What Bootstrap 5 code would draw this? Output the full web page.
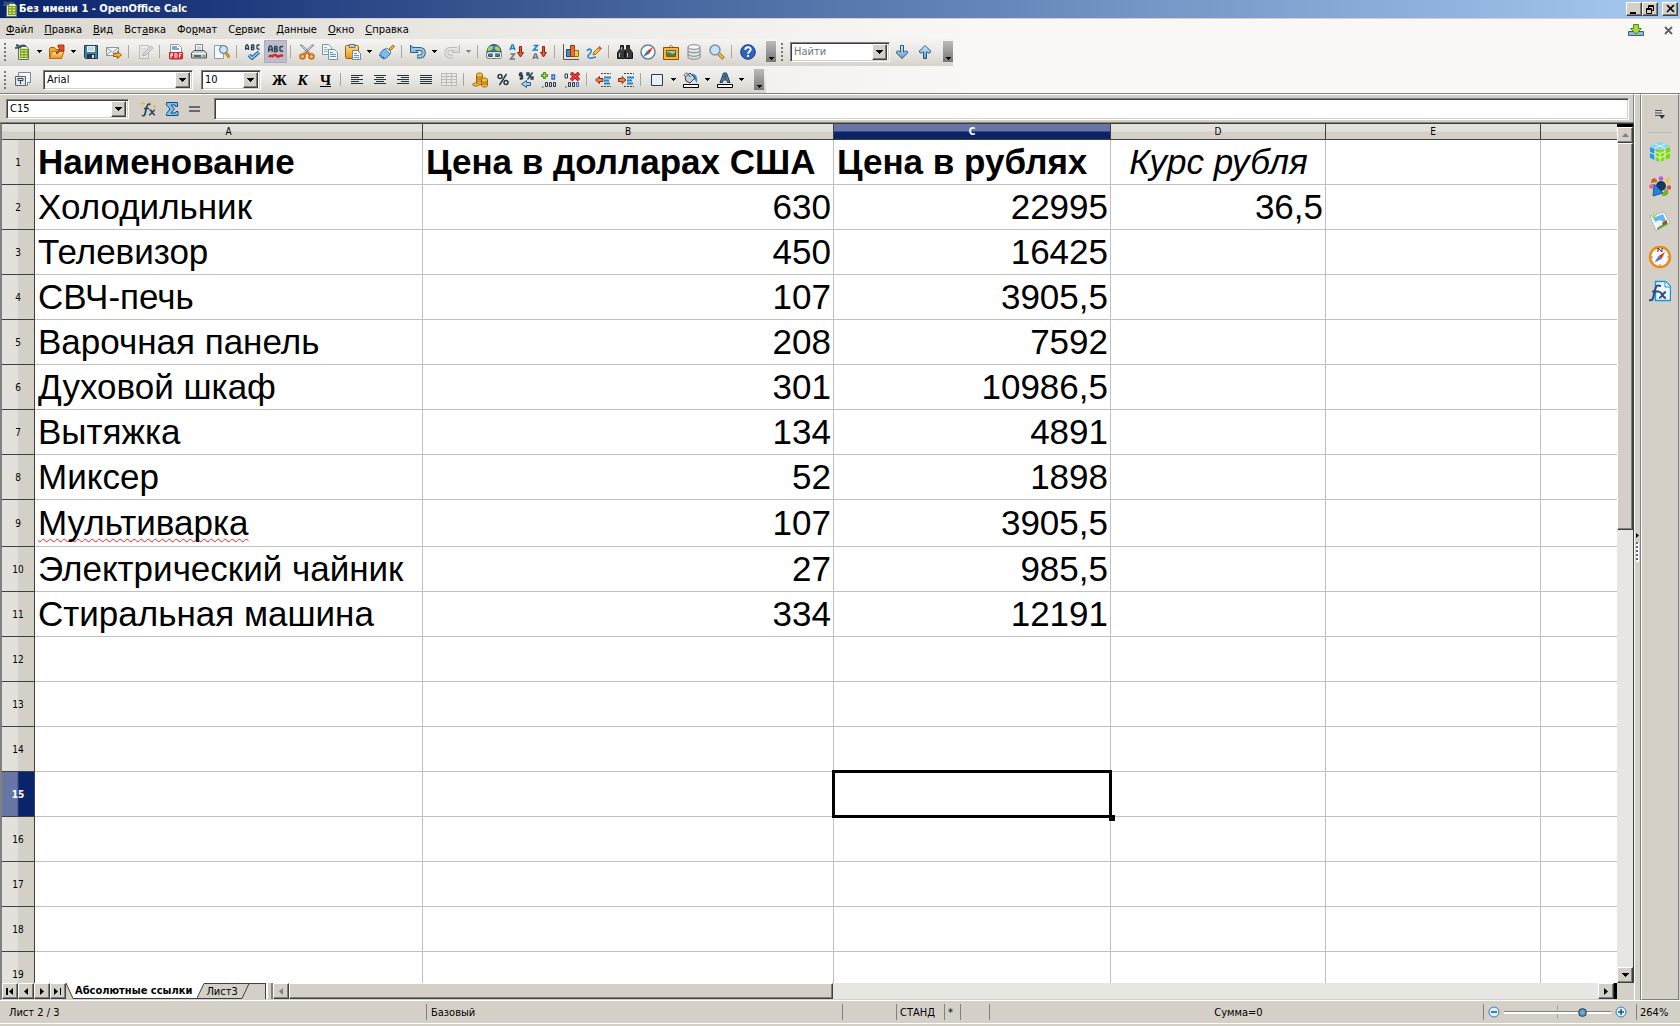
<!DOCTYPE html>
<html lang="ru">
<head>
<meta charset="utf-8">
<meta name="viewport" content="width=device-width, initial-scale=1">
<title>Без имени 1 - OpenOffice Calc</title>
<link href="https://cdn.jsdelivr.net/npm/bootstrap@5.3.0/dist/css/bootstrap.min.css" rel="stylesheet">
<style>
:root{--face:#d4d0c8;--dark:#404040;--shade:#808080}
body{font-family:"DejaVu Sans Condensed","DejaVu Sans",sans-serif;font-size:11px;line-height:14px;color:#000;background:var(--face)}
button,input,select{font:inherit;color:inherit;border-radius:0}
svg{display:block;flex:none}
.titlebar{height:19px;background:linear-gradient(90deg,#0a246a,#a6caf0);color:#fff;border-bottom:1px solid var(--face);padding:0 2px 0 3px}
.win-btn,.sq-btn{padding:0;background:var(--face);border:1px solid;border-color:#fff var(--dark) var(--dark) #fff;box-shadow:inset -1px -1px var(--shade);display:flex;align-items:center;justify-content:center;flex:none}
.win-btn{width:16px;height:14px}
.sq-btn{width:16px;height:16px}
.chrome{background:linear-gradient(90deg,#dcd9d2,#f9f8f6 58%);border-bottom:1px solid var(--shade)}
.menus{height:20px;padding:2px 0 0 6px;gap:11px}
.menus a{color:#000;text-decoration:none}
.menu-tools{gap:10px}
.tbar{height:27px;background:linear-gradient(#f5f4f2,#e9e7e3 50%,#d6d3cc);padding:0 0 2px 3px}
.tbar.second{width:766px;padding-bottom:0}
.grip{width:8px;height:19px;background:radial-gradient(circle at 2px 2px,#777 1px,transparent 1px) 0 0/4px 4px repeat-y}
.tb{width:23px;height:23px;padding:0;border:0;background:none;display:flex;align-items:center;justify-content:center;flex:none}
.tb.pressed{background:#bdbdcf;border:1px solid #acacc2}
.dd{width:11px;height:23px;padding:0;border:0;background:none;display:flex;align-items:center;justify-content:center;flex:none}
.sep{width:1px;height:13px;margin:0 4px 0 3px;background:#aaa69e;flex:none}
.more{width:10px;height:21px;margin-left:7px;border:0;padding:0 0 2px;background:linear-gradient(#bbb,#777);display:flex;align-items:flex-end;justify-content:center}
.combo{height:20px;background:#fff;border:1px solid;border-color:var(--shade) #fff #fff var(--shade);box-shadow:inset 1px 1px var(--dark),inset -1px -1px var(--face);padding:2px 2px 2px 3px;flex:none}
.combo select,.combo input{border:0;background:none;appearance:none;padding:0;outline:0;min-width:0;flex:1 1 0}
.combo .sq-btn{width:15px;height:16px}
.w-font{width:150px;margin:0 8px 0 9px}
.w-size{width:60px;margin-right:7px}
.w-find{width:100px;margin-left:2px}
.w-cell{width:123px}
.glyph{font-family:"Liberation Serif",serif;font-weight:700;font-size:15px;line-height:18px}
.fbar{height:29px;padding:0 4px 0 6px;border-right:1px solid var(--shade);border-bottom:1px solid var(--shade);border-top:1px solid #fff}
.fbar .line{height:22px}
.sheet{border-left:2px solid var(--shade);border-top:1px solid var(--dark);min-height:0;flex:1 1 0}
.grid{flex:1 1 0;min-width:0;overflow:hidden;background:#fff}
.grid table{border-collapse:separate;border-spacing:0;table-layout:fixed;width:100%;font-family:"Liberation Sans",Arial,sans-serif;font-size:35px;line-height:40px}
.grid th,.grid td{padding:0 2px 0 3px;white-space:nowrap;border-right:1px solid #c0c0c0;border-bottom:1px solid #c0c0c0;vertical-align:middle}
.grid tbody tr{height:45px}
.grid tbody tr.tall{height:47px}
.grid thead th,.grid tbody th{font-family:"DejaVu Sans Condensed",sans-serif;font-size:10px;line-height:14px;font-weight:400;text-align:center;padding:0;border-color:var(--dark)}
.grid thead th{height:16px;background:linear-gradient(#e2e1dc 7px,var(--face) 8px)}
.grid tbody th{padding-top:2px;background:linear-gradient(90deg,#e2e1dc 15px,var(--face) 17px)}
.grid thead th.on{background:linear-gradient(#6876a6 7px,#0a246a 8px);color:#fff;font-weight:700}
.grid tbody th.on{background:linear-gradient(90deg,#6876a6 15px,#0a246a 17px);color:#fff;font-weight:700}
.grid .num{text-align:right}
.grid .rate{font-style:italic;text-align:center}
.grid td:last-child,.grid thead th:last-child{border-right:0}
.typo{text-decoration:underline wavy #e22 1px;text-underline-offset:3px;text-decoration-skip-ink:none}
.cursor{position:absolute;inset:-2px;border:3px solid #000}
.cursor::after{content:"";position:absolute;right:-6px;bottom:-6px;width:6px;height:6px;background:#000}
.vbar{width:17px;background:#e8e6e2;border-right:1px solid var(--dark)}
.vbar .cap{height:3px;background:#000}
.thumb{background:var(--face);border:1px solid;border-color:#fff var(--dark) var(--dark) #fff;box-shadow:inset -1px -1px var(--shade)}
.vbar .thumb{flex:0 0 45%}
.tabs{height:17px;border-left:2px solid var(--shade);border-bottom:1px solid var(--face)}
.tabs .sheet-tab{height:16px;border:0;border-bottom:1px solid var(--dark);padding:0 0 0 1px;line-height:16px;background:var(--face);border-top:1px solid var(--dark)}
.tabs .sheet-tab.now{background:#fff;font-weight:700;border-top:0;padding:0 5px 0 2px}
.tabfill{width:16px;height:16px;border:1px solid var(--dark);border-left:0;border-bottom:0}
.split{width:7px;height:16px;border-left:2px solid #fff;border-right:2px solid var(--shade)}
.hbar{background:#e8e6e2;height:16px;flex:1 1 0;min-width:0}
.hbar .thumb{height:16px;width:544px}
.side-split{width:7px;border-left:1px solid #fff;border-right:1px solid var(--shade);border-top:1px solid #fff;flex:none}
.dots{width:3px;height:20px;background:radial-gradient(circle at 1px 1px,#666 1px,#fff 1px) 0 0/3px 4px}
.side{width:38px;margin-right:1px;border:1px solid var(--shade);border-left-color:#fff;border-top-color:#fff;padding-top:9px;flex:none}
.side .tb{height:35px;width:30px}
.side .tb.cfg{height:20px}
.side hr{width:24px;margin:8px 0 1px;border-color:var(--shade)}
.status{height:26px;border-top:1px solid #fff;padding-bottom:1px}
.status .inner{height:23px;border-bottom:1px solid #fff}
.pane{height:16px;line-height:18px;border-left:1px solid var(--shade);padding-left:4px;white-space:nowrap;flex:none}
.p-sheet{width:426px;padding-left:9px;border:0}.p-style{width:416px}.p-x{width:54px}.p-std{width:48px;padding-left:3px}.p-star{width:16px;padding-left:3px}.p-y{width:29px}.p-zoom{width:153px;padding:0 9px 0 4px}.p-pct{width:44px;padding-left:3px}
.zoomer{appearance:none;background:linear-gradient(var(--shade) 1px,#fff 1px) center/100% 3px no-repeat,linear-gradient(#aaa69e,#aaa69e) center/1px 14px no-repeat;height:14px;width:0;min-width:0;flex:1 1 0;margin:0 4px}
.zoomer::-webkit-slider-thumb{appearance:none;width:9px;height:9px;border-radius:50%;background:radial-gradient(#8bbbd8,#2b6c95);border:1px solid #1e4c6d}
</style>
<script src="https://cdn.jsdelivr.net/npm/bootstrap@5.3.0/dist/js/bootstrap.bundle.min.js"></script>
</head>
<body class="vh-100 d-flex flex-column overflow-hidden">
<svg width="0" height="0" class="position-absolute" aria-hidden="true"><defs>
<linearGradient id="gb" x2="0" y2="1"><stop stop-color="#d8edfa"/><stop offset="1" stop-color="#5a9dce"/></linearGradient>
<linearGradient id="go" x2="0" y2="1"><stop stop-color="#ffe08a"/><stop offset="1" stop-color="#e8921c"/></linearGradient>
<symbol id="dn" viewBox="0 0 5 3"><path d="M0 0h5v1H4v1H3v1H2V2H1V1H0z"/></symbol>
<symbol id="dn7" viewBox="0 0 7 4"><path d="M0 0h7v1H6v1H5v1H4v1H3V3H2V2H1V1H0z"/></symbol>
<symbol id="calc" viewBox="0 0 16 16"><path d="M3.500 2.500h8l2 2v11h-10z" fill="#f8faf8" stroke="#5f6d5f"/><path d="M5.500 5.500h7v8h-7z" fill="#f4fae0" stroke="#7fa515" stroke-width="1.400"/><path d="M9 5.500v8M5.500 8h7M5.500 10.700h7" stroke="#7fa515" stroke-width="1.400"/><path d="M0 4.500c2-2 3 0 4-1s4-3 7-1M1 1c3 0 4 2 5 3" fill="none" stroke="#3f586e" stroke-width="2"/></symbol>
</defs></svg>

<header class="titlebar d-flex align-items-center">
  <svg width="16" height="16"><use href="#calc"/></svg>
  <strong class="flex-grow-1">Без имени 1 - OpenOffice Calc</strong>
  <button class="win-btn" aria-label="Свернуть"><svg width="10" height="9"><path d="M1 7h6v2H1z"/></svg></button>
  <button class="win-btn" aria-label="Восстановить"><svg width="10" height="9" fill="none" stroke="#000"><path d="M3.500 3V.500h5v5H7M3 1.500h6M1.500 3.500h5v5h-5zM1 4.500h6"/></svg></button>
  <button class="win-btn ms-1" aria-label="Закрыть"><svg width="9" height="8"><path d="M1 0l7 7M8 0L1 7" stroke="#000" stroke-width="1.600"/></svg></button>
</header>

<div class="chrome flex-shrink-0">
  <nav class="menus d-flex align-items-center" aria-label="Главное меню">
    <a href="#"><u>Ф</u>айл</a><a href="#"><u>П</u>равка</a><a href="#"><u>В</u>ид</a><a href="#">Вст<u>а</u>вка</a><a href="#">Фо<u>р</u>мат</a><a href="#">С<u>е</u>рвис</a><a href="#"><u>Д</u>анные</a><a href="#"><u>О</u>кно</a><a href="#"><u>С</u>правка</a>
    <div class="menu-tools ms-auto d-flex align-items-center">
      <button class="tb" aria-label="Обновления"><svg width="16" height="14"><path d="M.5 8.500h15v4H.5z" fill="#8fb7d2" stroke="#35607e"/><path d="M5.500 1.500h5v4h3L8 11 2.500 5.500h3z" fill="#a5db3c" stroke="#4d8a12"/></svg></button>
      <button class="tb" aria-label="Закрыть документ"><svg width="9" height="9"><path d="M1 1l7 7M8 1L1 8" stroke="#5b6168" stroke-width="1.800"/></svg></button>
    </div>
  </nav>

  <div class="d-flex">
  <div class="tbar d-flex align-items-center" role="toolbar" aria-label="Стандартная">
    <span class="grip"></span>
    <button class="tb" aria-label="Создать"><svg width="16" height="16"><use href="#calc"/></svg></button><button class="dd" aria-label="Создать: список"><svg width="5" height="3"><use href="#dn"/></svg></button>
    <button class="tb" aria-label="Открыть"><svg width="16" height="16"><path d="M.5 14.500v-10l1-1h4l1 2h6v9z" fill="#f0aa35" stroke="#a85f0c"/><path d="M.5 14.500L3 7.500h12l-2.500 7z" fill="url(#go)" stroke="#b8700f"/><path d="M7 9l4-4-2-2V1h6v6h-2l-1-1-4 4z" fill="#f04a24" stroke="#9c2208" stroke-width=".8"/></svg></button><button class="dd" aria-label="Открыть: список"><svg width="5" height="3"><use href="#dn"/></svg></button>
    <button class="tb" aria-label="Сохранить"><svg width="14" height="14"><path d="M.5.500h13v13h-12l-1-1z" fill="#457f9f" stroke="#173f56"/><path d="M3 1h8v6H3z" fill="#eaf5fb"/><path d="M4 3h6M4 5h6" stroke="#9cbccc"/><path d="M3 9h8v4H3z" fill="#233845"/><path d="M8 10h2v3H8z" fill="#d3e2ea"/></svg></button>
    <button class="tb" aria-label="Письмо"><svg width="16" height="14"><path d="M.5 2.500h12v8H.5z" fill="#edf2f6" stroke="#8a97a2"/><path d="M.5 2.500l6 5 6-5M.5 10.500l4-4M12 10L8.500 6.500" fill="none" stroke="#8a97a2"/><path d="M7.500 8.500h4v-2l4 3.500-4 3.500v-2h-4z" fill="#f6ae2d" stroke="#9b5e07"/></svg></button>
    <span class="sep"></span>
    <button class="tb" aria-label="Правка" disabled><svg width="16" height="16" opacity=".55"><path d="M2.500 1.500h9v13h-9z" fill="#eee" stroke="#999"/><path d="M4 5h6M4 8h5M4 11h3" stroke="#aaa"/><path d="M6 12l1-3 7-7 2 2-7 7z" fill="#ccc" stroke="#888"/></svg></button>
    <span class="sep"></span>
    <button class="tb" aria-label="Экспорт в PDF"><svg width="14" height="16"><path d="M1.500.500h8l3 3v12h-11z" fill="#fff" stroke="#8b98a3"/><path d="M3 3h5M3 5h7" stroke="#5d89b0" stroke-width="1.500"/><path d="M0 8h14v7H0z" fill="#e5252a"/><path d="M2 14V9.500h1.500v2H2M6 9.500v4h1.500l.5-1v-2l-.5-1zM10.500 14V9.500H13M10.500 11.500H12" fill="none" stroke="#fff"/></svg></button>
    <button class="tb" aria-label="Печать"><svg width="16" height="16"><path d="M4.500.500h7v7h-7z" fill="#fff" stroke="#7b8790"/><path d="M6 3h4M6 5h4" stroke="#9ab"/><path d="M.5 9L3 6.500h10L15.500 9v5H.5z" fill="#c4cacd" stroke="#4f585d"/><path d="M1 9.500h14" stroke="#fff"/><path d="M3 11h7v2H3z" fill="#59636a"/><path d="M12 11h2v2h-2z" fill="#4ec336"/></svg></button>
    <button class="tb" aria-label="Предварительный просмотр"><svg width="16" height="16"><path d="M.5 1.500h7l2 2v11h-9z" fill="#f6f9fb" stroke="#8e9ba5"/><circle cx="9.500" cy="5.500" r="4" fill="#c8e4f7" stroke="#47667d"/><path d="M12 9l3.500 4.500" stroke="#b37a13" stroke-width="3"/><path d="M12 9l3 4" stroke="#f4bf4c"/></svg></button>
    <span class="sep"></span>
    <button class="tb" aria-label="Орфография"><svg width="16" height="16"><path d="M.5 6V3l1-2h1l1 2v3M1 4.500h2M6.500 1v4.500h2l.5-1-.5-1.200h-2 1.800L9 2l-.5-1h-2M14.500 1.500l-1-.7-1.500.7v3l1.500 1 1-.8" fill="none" stroke="#263f55" stroke-width="1.300"/><path d="M4 11l3 3 7-6" fill="none" stroke="#1f5c94" stroke-width="3.600"/><path d="M4 11l3 3 7-6" fill="none" stroke="#8fd0ff" stroke-width="1.600"/></svg></button>
    <button class="tb pressed" aria-label="Автопроверка"><svg width="16" height="16"><path d="M.7 8V4l1.300-2h1l1.200 2v4M1 5.500h3M6.500 2.500v5h2.200l.8-1-.8-1.500H6.500h2l.7-1.200-.7-1.300h-2M15 3l-1-.7-2 .7v3.500l2 1 1-.8" fill="none" stroke="#2b3f52" stroke-width="1.400"/><path d="M1 13c2-3 3 0 4-1s2-2 4 0 2-2 6 0" fill="none" stroke="#e3231c" stroke-width="2.500"/></svg></button>
    <span class="sep"></span>
    <button class="tb" aria-label="Вырезать"><svg width="16" height="16"><path d="M1 1l9 9 1.500-1L3 1zM15 1l-9 9-1.500-1L13 1z" fill="#dbe4ea" stroke="#66747e" stroke-width=".8"/><circle cx="3.500" cy="12.500" r="2.300" fill="none" stroke="#d96d0e" stroke-width="2"/><circle cx="12.500" cy="12.500" r="2.300" fill="none" stroke="#d96d0e" stroke-width="2"/><path d="M5 11l3-2.500 3 2.500" fill="none" stroke="#d96d0e" stroke-width="2"/></svg></button>
    <button class="tb" aria-label="Копировать"><svg width="16" height="16" fill="#f3f8fc" stroke="#7793a8"><path d="M.5.500h6l3 3v7h-9z"/><path d="M2 3.500h3M2 5.500h5M2 7.500h5" stroke="#8fb6d4"/><path d="M6.500 5.500h6l3 3v7h-9z"/><path d="M8 8.500h3M8 10.500h6M8 12.500h6" stroke="#5a95c4"/></svg></button>
    <button class="tb" aria-label="Вставить"><svg width="16" height="16"><rect x=".5" y="1.500" width="13" height="13" rx="1" fill="url(#go)" stroke="#9d5f0b"/><path d="M4 .500h6v3H4z" fill="#c6ced3" stroke="#69757d"/><path d="M7.500 6.500h5l3 3v6h-8z" fill="#f3f8fc" stroke="#6c879c"/><path d="M9 9.500h3M9 11.500h5M9 13.500h5" stroke="#5a95c4"/></svg></button><button class="dd" aria-label="Вставить: список"><svg width="5" height="3"><use href="#dn"/></svg></button>
    <button class="tb" aria-label="Формат по образцу"><svg width="16" height="16"><path d="M10 5l4-4 1.500 1.500-4 4z" fill="#f4b83c" stroke="#a16a0b"/><path d="M6 5l5 5c-2 3-5 5-7 5l1-2-3 1 1-2-2.500 0C1 9 3 6 6 5z" fill="#7bbdf2" stroke="#2d6aa8"/><path d="M6 5l2-1 4 4-1 2z" fill="#d7e9f7" stroke="#5d83a5"/></svg></button>
    <span class="sep"></span>
    <button class="tb" aria-label="Отменить"><svg width="16" height="16"><path d="M3 5h7a3.500 3.500 0 010 7.500H7" fill="none" stroke="#2c6288" stroke-width="4.200"/><path d="M.5 1v7.500H8L5.500 6 7 4.500 4 3 3 4z" fill="#8cc1e2" stroke="#2c6288"/><path d="M3 5h7a3.500 3.500 0 010 7.500H7.500" fill="none" stroke="#9fcde8" stroke-width="2.200"/></svg></button><button class="dd" aria-label="Отменить: список"><svg width="5" height="3"><use href="#dn"/></svg></button>
    <button class="tb" aria-label="Вернуть" disabled><svg width="16" height="16"><path d="M13 5H6a3.500 3.500 0 000 7.500h3" fill="none" stroke="#b9b9b9" stroke-width="4"/><path d="M15.500 1v7.500H8L10.500 6" fill="#ddd" stroke="#b9b9b9"/><path d="M13 5H6a3.500 3.500 0 000 7.500h2.500" fill="none" stroke="#e4e4e4" stroke-width="2"/></svg></button><button class="dd" aria-label="Вернуть: список" disabled><svg width="5" height="3" fill="#888"><use href="#dn"/></svg></button>
    <span class="sep"></span>
    <button class="tb" aria-label="Гиперссылка"><svg width="16" height="16"><circle cx="8" cy="7.500" r="7" fill="#3c78b8" stroke="#28507a"/><path d="M2 4c3-3 4-2 5-1S5 7 3 7 1 6 2 4zM9 3c2-2 5 1 5 3s-3 1-4 0-2-2-1-3z" fill="#a7d84b"/><rect x="1.200" y="8.800" width="7.500" height="5" rx="2.500" fill="none" stroke="#2d3a33" stroke-width="2.400"/><rect x="7.300" y="8.800" width="7.500" height="5" rx="2.500" fill="none" stroke="#2d3a33" stroke-width="2.400"/><rect x="1.200" y="8.800" width="7.500" height="5" rx="2.500" fill="none" stroke="#e8eee8" stroke-width="1.400"/><rect x="7.300" y="8.800" width="7.500" height="5" rx="2.500" fill="none" stroke="#e8eee8" stroke-width="1.400"/></svg></button>
    <button class="tb" aria-label="Сортировка по возрастанию"><svg width="16" height="16" fill="none"><path d="M1 6l2-5h1l2 5M2 4.500h3" stroke="#1683d2" stroke-width="1.500"/><path d="M1.500 10h4l-4 5h4.500" stroke="#6b7681" stroke-width="1.500"/><path d="M10.500 2.500h2v6h2L11.500 13 8.500 8.500h2z" fill="#ee5730" stroke="#8d2408"/></svg></button>
    <button class="tb" aria-label="Сортировка по убыванию"><svg width="16" height="16" fill="none"><path d="M1.500 1.500h4l-4 4.500h4.500" stroke="#1683d2" stroke-width="1.500"/><path d="M1 15l2-5h1l2 5M2 13.500h3" stroke="#6b7681" stroke-width="1.500"/><path d="M10.500 2.500h2v6h2L11.500 13 8.500 8.500h2z" fill="#ee5730" stroke="#8d2408"/></svg></button>
    <span class="sep"></span>
    <button class="tb" aria-label="Диаграмма"><svg width="16" height="16"><path d="M.5 0v15.500H16" fill="none" stroke="#555"/><path d="M3.500 5.500h4v7h-4z" fill="#3d8fc9" stroke="#1a4a70"/><path d="M7.500 1.500h4v11h-4z" fill="#ee6d2d" stroke="#93340b"/><path d="M11.500 6.500h4v6h-4z" fill="#f6c64c" stroke="#976909"/></svg></button>
    <button class="tb" aria-label="Рисование"><svg width="16" height="16"><path d="M1 7c2-3 5-2 4 1s-4 3-3 5 5 1 8 0" fill="none" stroke="#3583c9" stroke-width="1.600"/><path d="M7 11l1-3 5.500-5.500 2 2L10 10z" fill="#f8cb45" stroke="#9a6b10"/><path d="M12 4l1.500-1.500 2 2L14 6z" fill="#e7566a"/></svg></button>
    <span class="sep"></span>
    <button class="tb" aria-label="Найти и заменить"><svg width="16" height="16" fill="#39393b" stroke="#161616"><path d="M3.500 1.500h3v3l1 2v8h-7v-6l3-4zM12.500 1.500h-3v3l-1 2v8h7v-6l-3-4z"/><path d="M2.500 9v4M10.500 9v4M4.500 3v3" stroke="#bbb"/></svg></button>
    <button class="tb" aria-label="Навигатор"><svg width="16" height="16"><circle cx="8" cy="8" r="7" fill="#f4f9fd" stroke="#668294" stroke-width="1.500"/><path d="M13 3L9.500 9.500 7 7z" fill="#e02a1c"/><path d="M3 13l4-6 2.500 2.500z" fill="#2d6fbf"/></svg></button>
    <button class="tb" aria-label="Галерея"><svg width="16" height="16"><path d="M5 4l3-3 3 3" fill="none" stroke="#8f8f8f"/><path d="M.5 3.500h15v12H.5z" fill="#f7b63c" stroke="#8d4d05"/><path d="M3.500 6.500h9v6h-9z" fill="#8fc8ee" stroke="#8d4d05"/><path d="M4 12V9l2-1 3 2 3-1v3z" fill="#3f8b28"/></svg></button>
    <button class="tb" aria-label="Источники данных"><svg width="14" height="16" fill="#dfe3e6" stroke="#7e868b"><path d="M1 3v10c0 3 12 3 12 0V3"/><ellipse cx="7" cy="3" rx="6" ry="2.300" fill="#f7f8f8"/><path d="M1 6.500c0 3 12 3 12 0M1 10c0 3 12 3 12 0" fill="none"/></svg></button>
    <button class="tb" aria-label="Масштаб"><svg width="16" height="16"><path d="M9.500 9.500l5 5" stroke="#9a6610" stroke-width="3.600"/><path d="M9.500 9.500l4.500 4.500" stroke="#f5bf42" stroke-width="2"/><circle cx="6" cy="6" r="5" fill="#c5e3fa" stroke="#7990a3" stroke-width="1.500"/></svg></button>
    <span class="sep"></span>
    <button class="tb" aria-label="Справка"><svg width="16" height="16"><circle cx="8" cy="8" r="7.300" fill="#2c62c3" stroke="#1a3c86"/><path d="M5.300 6c0-3.500 5.400-3.500 5.400-.5C10.700 7.500 8 7.500 8 9.700" fill="none" stroke="#fff" stroke-width="1.900"/><path d="M7 11h2v2H7z" fill="#fff"/></svg></button>
    <button class="more" aria-label="Ещё"><svg width="5" height="3"><use href="#dn"/></svg></button>
  </div>
  <div class="tbar d-flex align-items-center ps-1" role="toolbar" aria-label="Поиск">
    <span class="grip"></span>
    <span class="combo w-find d-flex align-items-center"><input class="text-secondary" aria-label="Найти" value="Найти"><button class="sq-btn" aria-label="История поиска"><svg width="7" height="4"><use href="#dn7"/></svg></button></span>
    <button class="tb" aria-label="Найти далее"><svg width="12" height="14"><path d="M4.500.500h3V7h1l1.500-1.500 1.500 1.500v1L6 13.500.5 8V7L2 5.500 3.500 7h1z" fill="url(#gb)" stroke="#23577b"/></svg></button>
    <button class="tb" aria-label="Найти ранее"><svg width="12" height="14"><path d="M4.500 13.500h3V7h1L10 8.500 11.500 7V6L6 .500.500 6v1L2 8.500 3.500 7h1z" fill="url(#gb)" stroke="#23577b"/></svg></button>
    <button class="more" aria-label="Ещё"><svg width="5" height="3"><use href="#dn"/></svg></button>
  </div>
  </div>

  <div class="tbar second d-flex align-items-center" role="toolbar" aria-label="Форматирование">
    <span class="grip"></span>
    <button class="tb" aria-label="Стили"><svg width="16" height="16"><path d="M3.500.500h12v10l-3 3h-9z" fill="#f5f7f8" stroke="#7d8990"/><path d="M.5 4.500h10v9H.5z" fill="#dfe6ea" stroke="#56646e"/><path d="M3 6.500h5v2H3zM5.500 8v4" fill="none" stroke="#35434d"/><path d="M12.500 13.500v-3h3" fill="#fff" stroke="#7d8990"/></svg></button>
    <span class="combo w-font d-flex align-items-center"><select aria-label="Шрифт"><option>Arial</option></select><span class="sq-btn pe-none"><svg width="7" height="4"><use href="#dn7"/></svg></span></span>
    <span class="combo w-size d-flex align-items-center"><select aria-label="Размер шрифта"><option>10</option></select><span class="sq-btn pe-none"><svg width="7" height="4"><use href="#dn7"/></svg></span></span>
    <button class="tb glyph" aria-label="Полужирный">Ж</button><button class="tb glyph fst-italic" aria-label="Курсив">К</button><button class="tb glyph text-decoration-underline" aria-label="Подчёркнутый">Ч</button>
    <span class="sep"></span>
    <button class="tb" aria-label="По левому краю"><svg width="12" height="10" stroke="#27323b"><path d="M0 .500h12M0 2.500h8M0 4.500h12M0 6.500h8M0 8.500h12"/></svg></button>
    <button class="tb" aria-label="По центру"><svg width="12" height="10" stroke="#27323b"><path d="M0 .500h12M2 2.500h8M0 4.500h12M2 6.500h8M0 8.500h12"/></svg></button>
    <button class="tb" aria-label="По правому краю"><svg width="12" height="10" stroke="#27323b"><path d="M0 .500h12M4 2.500h8M0 4.500h12M4 6.500h8M0 8.500h12"/></svg></button>
    <button class="tb" aria-label="По ширине"><svg width="12" height="10" stroke="#27323b"><path d="M0 .500h12M0 2.500h12M0 4.500h12M0 6.500h12M0 8.500h12"/></svg></button>
    <button class="tb" aria-label="Объединить ячейки" disabled><svg width="16" height="13" fill="#e9e8e5" stroke="#bbb"><path d="M.5.500h15v12H.5zM.5 3.500h15M.5 6.500h15M.5 9.500h15M5.500.500v12M10.500.500v12"/></svg></button>
    <span class="sep"></span>
    <button class="tb" aria-label="Денежный формат"><svg width="16" height="16" fill="#f7bd3b" stroke="#9f640a"><path d="M4.500 2.500c0-2 6-2 6 0v10h-6z"/><path d="M4.500 4.500c1 1 5 1 6 0M4.500 6.500c1 1 5 1 6 0M4.500 8.500c1 1 5 1 6 0" fill="none"/><path d="M9.500 7.500c0-2 6-2 6 0v6c0 2-6 2-6 0z"/><path d="M9.500 9.500c1 1 5 1 6 0M9.500 11.500c1 1 5 1 6 0" fill="none"/><path d="M.5 12.500c0-2 7-2 7 0s-7 2-7 0z"/></svg></button>
    <button class="tb" aria-label="Процентный формат"><svg width="12" height="13" fill="none" stroke="#27384a" stroke-width="1.500"><circle cx="3" cy="3.500" r="2"/><circle cx="9" cy="9.500" r="2"/><path d="M9.500 1L2.500 12"/></svg></button>
    <button class="tb" aria-label="Стандартный формат"><svg width="16" height="16" fill="none" stroke="#27384a"><path d="M4.500 1.500h-3v2h3v3h-3M3 0v8M9 1h2v2H9zM13 5h2v2h-2zM14.500.500l-5 7" stroke-width="1.300"/><path d="M12.500 10.500h-4v-2L3.500 12l5 3.500v-2h4z" fill="#9fd3f5" stroke="#27608d"/></svg></button>
    <button class="tb" aria-label="Добавить разряд"><svg width="16" height="16" fill="none" stroke="#27384a"><path d="M2.500.500h2v2h2v2h-2v2h-2v-2h-2v-2h2z" fill="#9be045" stroke="#3c8a10"/><path d="M11 3h2.500v4H11z" stroke="#2667d2" stroke-width="1.400"/><path d="M1 15h1.500M4.500 10.500h2v4h-2zM8.500 10.500h2v4h-2zM12.500 10.500h2v4h-2z"/></svg></button>
    <button class="tb" aria-label="Удалить разряд"><svg width="16" height="16" fill="none" stroke="#27384a"><path d="M1 2h2.500v4H1z"/><path d="M7 1l8 7M15 1L7 8" stroke="#9d1212" stroke-width="3.600"/><path d="M7 1l8 7M15 1L7 8" stroke="#f03a3a" stroke-width="2"/><path d="M1 15h1.500M4.500 10.500h2v4h-2zM8.500 10.500h2v4h-2z"/><path d="M12.500 10.500h2v4h-2z" stroke="#2667d2"/></svg></button>
    <span class="sep"></span>
    <button class="tb" aria-label="Уменьшить отступ"><svg width="16" height="14" fill="none"><path d="M6 .500h10M6 13.500h10" stroke="#36424c" stroke-dasharray="2 1"/><path d="M9 4.500h7M9 7.500h5M9 10.500h6" stroke="#1d86cf" stroke-width="2"/><path d="M8 5.500H4.500v-2L.5 7l4 3.500v-2H8z" fill="#f08250" stroke="#8d2e0a"/></svg></button>
    <button class="tb" aria-label="Увеличить отступ"><svg width="16" height="14" fill="none"><path d="M6 .500h10M6 13.500h10" stroke="#36424c" stroke-dasharray="2 1"/><path d="M9 4.500h7M9 7.500h5M9 10.500h6" stroke="#1d86cf" stroke-width="2"/><path d="M.5 5.500H4v-2L8 7l-4 3.500v-2H.5z" fill="#f08250" stroke="#8d2e0a"/></svg></button>
    <span class="sep"></span>
    <button class="tb" aria-label="Обрамление"><svg width="12" height="12"><path d="M.5.500h11v11H.5z" fill="#e8eff6" stroke="#2c3c4b"/></svg></button><button class="dd" aria-label="Обрамление: список"><svg width="5" height="3"><use href="#dn"/></svg></button>
    <button class="tb" aria-label="Цвет фона"><svg width="16" height="16"><path d="M8 2c4-1 7 2 6 9l-3-4z" fill="#3d8fcc"/><path d="M2 5l5-4 5 5-5 5-4-2z" fill="#c4d0d8" stroke="#36434d"/><path d="M1 4c1-4 4-4 6 1" fill="none" stroke="#47555f"/><path d="M.5 12.500h15v3H.5z" fill="#fff" stroke="#000"/></svg></button><button class="dd" aria-label="Цвет фона: список"><svg width="5" height="3"><use href="#dn"/></svg></button>
    <button class="tb" aria-label="Цвет шрифта"><svg width="16" height="16"><path d="M3 10.500L6.500 1h3L13 10.500h-2.500L9.800 8H6.200l-.7 2.500zM6.800 6h2.400L8 2.800z" fill="#4d86ac" stroke="#1f3d55"/><path d="M.5 12.500h15v3H.5z" fill="#fff" stroke="#000"/></svg></button><button class="dd" aria-label="Цвет шрифта: список"><svg width="5" height="3"><use href="#dn"/></svg></button>
    <button class="more" aria-label="Ещё"><svg width="5" height="3"><use href="#dn"/></svg></button>
  </div>
</div>

<main class="d-flex flex-grow-1" style="min-height:0">
  <div class="d-flex flex-column flex-grow-1" style="min-width:0">
    <div class="fbar d-flex align-items-center flex-shrink-0">
      <span class="combo w-cell d-flex align-items-center"><input aria-label="Имя ячейки" value="C15"><button class="sq-btn" aria-label="Список имён"><svg width="7" height="4"><use href="#dn7"/></svg></button></span>
      <button class="tb ms-2" aria-label="Мастер функций"><svg width="16" height="16" fill="none" stroke="#27445c"><path d="M1 14.500c3 1 3-1 4-6s2-6 4.500-5M3 7.500h5" stroke-width="1.700"/><path d="M8.500 9c2-1 3 5 5.500 5M14 9c-2 0-4 5-6 5" stroke-width="1.700"/><path d="M2 .500v4M0 2.500h4M9 0v2M13.500 4v3M12 5.500h3" stroke="#f3b51c"/></svg></button>
      <button class="tb" aria-label="Сумма"><svg width="14" height="14"><path d="M1.500.500h11v4h-2L10 3H6l3.500 4L6 11h4.500l.5-1.500h2v4H1.500v-2L5 7 1.500 3z" fill="#7cc0ee" stroke="#164f7e"/></svg></button>
      <button class="tb" aria-label="Функция"><svg width="11" height="6"><path d="M0 1h11M0 5h11" stroke="#3b4b59" stroke-width="1.500"/></svg></button>
      <span class="combo line d-flex flex-grow-1 ms-2"><input aria-label="Строка ввода"></span>
    </div>
    <div class="sheet d-flex">
      <div class="grid">
        <table>
          <colgroup><col style="width:33px"><col style="width:388px"><col style="width:411px"><col style="width:277px"><col style="width:215px"><col style="width:215px"><col></colgroup>
          <thead><tr><th></th><th>A</th><th>B</th><th class="on">C</th><th>D</th><th>E</th><th></th></tr></thead>
          <tbody>
            <tr><th>1</th><td class="fw-bold">Наименование</td><td class="fw-bold">Цена в долларах США</td><td class="fw-bold">Цена в рублях</td><td class="rate">Курс рубля</td><td></td><td></td></tr>
            <tr><th>2</th><td>Холодильник</td><td class="num">630</td><td class="num">22995</td><td class="num">36,5</td><td></td><td></td></tr>
            <tr><th>3</th><td>Телевизор</td><td class="num">450</td><td class="num">16425</td><td></td><td></td><td></td></tr>
            <tr><th>4</th><td>СВЧ-печь</td><td class="num">107</td><td class="num">3905,5</td><td></td><td></td><td></td></tr>
            <tr><th>5</th><td>Варочная панель</td><td class="num">208</td><td class="num">7592</td><td></td><td></td><td></td></tr>
            <tr><th>6</th><td>Духовой шкаф</td><td class="num">301</td><td class="num">10986,5</td><td></td><td></td><td></td></tr>
            <tr><th>7</th><td>Вытяжка</td><td class="num">134</td><td class="num">4891</td><td></td><td></td><td></td></tr>
            <tr><th>8</th><td>Миксер</td><td class="num">52</td><td class="num">1898</td><td></td><td></td><td></td></tr>
            <tr class="tall"><th>9</th><td><span class="typo">Мультиварка</span></td><td class="num">107</td><td class="num">3905,5</td><td></td><td></td><td></td></tr>
            <tr><th>10</th><td>Электрический чайник</td><td class="num">27</td><td class="num">985,5</td><td></td><td></td><td></td></tr>
            <tr><th>11</th><td>Стиральная машина</td><td class="num">334</td><td class="num">12191</td><td></td><td></td><td></td></tr>
            <tr><th>12</th><td></td><td></td><td></td><td></td><td></td><td></td></tr>
            <tr><th>13</th><td></td><td></td><td></td><td></td><td></td><td></td></tr>
            <tr><th>14</th><td></td><td></td><td></td><td></td><td></td><td></td></tr>
            <tr><th class="on">15</th><td></td><td></td><td class="position-relative"><span class="cursor"></span></td><td></td><td></td><td></td></tr>
            <tr><th>16</th><td></td><td></td><td></td><td></td><td></td><td></td></tr>
            <tr><th>17</th><td></td><td></td><td></td><td></td><td></td><td></td></tr>
            <tr><th>18</th><td></td><td></td><td></td><td></td><td></td><td></td></tr>
            <tr><th>19</th><td></td><td></td><td></td><td></td><td></td><td></td></tr>
          </tbody>
        </table>
      </div>
      <div class="vbar d-flex flex-column flex-shrink-0">
        <div class="cap"></div>
        <button class="sq-btn w-100" aria-label="Вверх"><svg width="7" height="4" fill="#808080"><path d="M0 4L3.500 0 7 4z"/></svg></button>
        <div class="thumb"></div>
        <button class="sq-btn w-100 mt-auto" aria-label="Вниз"><svg width="7" height="4"><use href="#dn7"/></svg></button>
      </div>
    </div>
    <div class="tabs d-flex flex-shrink-0">
      <button class="sq-btn" aria-label="Первый лист"><svg width="8" height="7"><path d="M0 0h2v7H0zM7 0v7L3 3.500z"/></svg></button>
      <button class="sq-btn" aria-label="Предыдущий лист"><svg width="4" height="7"><path d="M4 0v7L0 3.500z"/></svg></button>
      <button class="sq-btn" aria-label="Следующий лист"><svg width="4" height="7"><path d="M0 0v7l4-3.500z"/></svg></button>
      <button class="sq-btn" aria-label="Последний лист"><svg width="8" height="7"><path d="M6 0h1v7H6zM0 0v7l4-3.500z"/></svg></button>
      <svg width="7" height="16"><path d="M0 0l7 15V0z" fill="#fff"/><path d="M0 0l7 15.500" stroke="#404040"/></svg>
      <button class="sheet-tab now">Абсолютные ссылки</button>
      <svg width="8" height="16"><path d="M0 0h7L0 15z" fill="#fff"/><path d="M0 15.500h8M0 15L7 .500h1" fill="none" stroke="#404040"/></svg>
      <button class="sheet-tab">Лист3</button>
      <svg width="12" height="16"><path d="M0 .500h12M0 15.500h4L11 .500" fill="none" stroke="#404040"/></svg>
      <span class="tabfill"></span><span class="split"></span>
      <div class="hbar d-flex">
        <button class="sq-btn" aria-label="Влево"><svg width="4" height="7" fill="#808080"><path d="M4 0v7L0 3.500z"/></svg></button>
        <div class="thumb"></div>
        <button class="sq-btn ms-auto" aria-label="Вправо"><svg width="4" height="7"><path d="M0 0v7l4-3.500z"/></svg></button>
        <svg width="3" height="16"><path d="M0 0h3v16H0z"/></svg>
      </div>
      <svg width="17" height="16"></svg>
    </div>
  </div>
  <div class="side-split d-flex flex-column align-items-center justify-content-center"><svg width="3" height="5"><path d="M0 0v5l3-2.500z"/></svg><span class="dots mt-1"></span></div>
  <aside class="side d-flex flex-column align-items-center">
    <button class="tb cfg" aria-label="Настройки панели"><svg width="10" height="10"><path d="M0 1.500h7M0 4h7M0 6.500h7" stroke="#444c57"/><path d="M4 6h6L7 10z" fill="#27303c"/></svg></button>
    <hr>
    <button class="tb" aria-label="Свойства"><svg width="22" height="22"><path d="M1 5l10-4 10 4-10 4z" fill="#7ed6f7"/><path d="M1 6l10 4v11L1 17z" fill="#2399ee"/><path d="M11 10l10-4v11l-10 4z" fill="#7bd60f"/><path d="M6 10.500l5-2 5 2v8l-5 2.500-5-2.500z" fill="#86de16"/><path d="M1 11.500l5 2M6 8v11M11 12.500V21M6 10.500l5 2 5-2M16 8v11M16 13.500l5-2M6 15l5 2 5-2M6 3l10 4M16 3L6 7" fill="none" stroke="#e6f5dc"/></svg></button>
    <button class="tb" aria-label="Стили"><svg width="22" height="22"><circle cx="12" cy="10" r="5" fill="#113c5e"/><path d="M5 8l-1 12 10-3z" fill="#2383d6" stroke="#145ca1"/><path d="M2 7c0-7 7-5 6-1z" fill="#d4620d"/><path d="M13 20c0-4 3-4 3-7 5 0 5 8-3 7z" fill="#75ae21"/><circle cx="12" cy="2.500" r="2.300" fill="#b35bd8"/><path d="M19 0l1 3h2l-2 2 1 3-2-2-3 2 1-3-2-2h3z" fill="#f6c13c"/><circle cx="2.500" cy="10.500" r="2.300" fill="#ea5aa3"/><circle cx="20" cy="11.500" r="2.300" fill="#e14a55"/></svg></button>
    <button class="tb" aria-label="Галерея"><svg width="22" height="22"><path d="M1 5l14-4 6 11-14 8z" fill="#fafafa" stroke="#9aa39a" stroke-dasharray="2 1"/><path d="M4 7l10-4 4 9-9 4z" fill="#67b7ef"/><path d="M6 11l5-2 5 3-8 5z" fill="#eef5fa"/><path d="M8 17l10-6 1 2-11 6z" fill="#57a51e"/><path d="M13 12l5-3v3l-4 2z" fill="#a2481a"/><path d="M2 6l6-3-3 4z" fill="#8ee02f"/></svg></button>
    <button class="tb" aria-label="Навигатор"><svg width="24" height="24"><circle cx="12" cy="12" r="10" fill="#fafafa" stroke="#ee8a1c" stroke-width="2.500"/><path d="M10 7V3l4 4V3" fill="none" stroke="#333"/><path d="M17 7l-3.500 7-3-3z" fill="#e3382a"/><path d="M6.500 17.500l4-6.500 3 3z" fill="#3d7fd9"/><path d="M3 12h2M19 12h2M12 19v2" stroke="#888"/></svg></button>
    <button class="tb" aria-label="Функции"><svg width="22" height="24"><path d="M6.500 1.500h10l5 5v14h-15z" fill="#eef7fd" stroke="#1795db" stroke-width="1.400"/><path d="M16 1.500V7h5.500" fill="#fff" stroke="#1795db"/><path d="M0 20c4 1 4-1 5.500-8S8 5 12 6M3 11.500h7" fill="none" stroke="#2c4a85" stroke-width="2"/><path d="M10 12c3-1 3 6 7 6M17 12c-3 0-4 6-7 6" fill="none" stroke="#2c4a85" stroke-width="2"/></svg></button>
  </aside>
</main>

<footer class="status flex-shrink-0">
  <div class="inner d-flex align-items-center">
    <span class="pane p-sheet">Лист 2 / 3</span><span class="pane p-style">Базовый</span><span class="pane p-x"></span><span class="pane p-std">СТАНД</span><span class="pane p-star">*</span><span class="pane p-y"></span>
    <span class="pane flex-grow-1 flex-shrink-1 text-center">Сумма=0</span>
    <span class="pane p-zoom d-flex align-items-center">
      <svg width="12" height="12"><circle cx="6" cy="6" r="5" fill="#dcefff" stroke="#3c7bad"/><path d="M3 6h6" stroke="#1c5686" stroke-width="1.500"/></svg>
      <input class="zoomer" type="range" min="0" max="100" value="76" aria-label="Масштаб">
      <svg width="12" height="12"><circle cx="6" cy="6" r="5" fill="#dcefff" stroke="#3c7bad"/><path d="M3 6h6M6 3v6" stroke="#1c5686" stroke-width="1.500"/></svg>
    </span>
    <span class="pane p-pct">264%</span>
  </div>
</footer>
</body>
</html>
